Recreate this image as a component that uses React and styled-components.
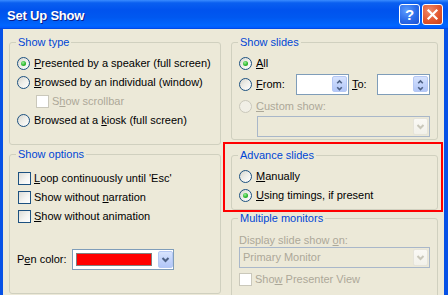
import React from 'react';
import styled, { createGlobalStyle, css } from 'styled-components';

const Global = createGlobalStyle`
  html, body { margin: 0; padding: 0; background: #ECE9D8; }
  body { font-family: "Liberation Sans", Arial, sans-serif; font-size: 11px; }
  * { box-sizing: border-box; }
`;

const Window = styled.div`
  width: 448px;
  height: 295px;
  overflow: hidden;
  display: flex;
  flex-direction: column;
  background: #0651E6;
`;

const TitleBar = styled.div`
  height: 29px;
  flex: none;
  display: flex;
  align-items: center;
  padding: 0 5px 0 7px;
  gap: 2px;
  background: linear-gradient(180deg, #3A8CFF 0%, #0A5FF0 10%, #0053EE 35%, #0058F0 60%, #0066FF 88%, #005BFF 95%, #0043DA 100%);
`;

const Title = styled.div`
  flex: 1;
  color: #fff;
  font-family: "Liberation Sans", Arial, sans-serif;
  font-weight: bold;
  font-size: 13px;
  letter-spacing: -0.2px;
  text-shadow: 1px 1px 0 #0A1D8A;
  padding-top: 1px;
`;

const CapButton = styled.div`
  width: 21px;
  height: 21px;
  border: 1px solid #fff;
  border-radius: 3px;
  display: flex;
  align-items: center;
  justify-content: center;
  color: #fff;
  font-weight: bold;
  font-size: 15px;
  background: ${p => p.close
    ? 'radial-gradient(circle at 35% 30%, #F08A6A 0%, #E2572F 55%, #C8401C 100%)'
    : 'radial-gradient(circle at 35% 30%, #5C9DFF 0%, #2B6BE8 55%, #1C50D2 100%)'};
`;

const Frame = styled.div`
  flex: 1;
  display: flex;
  padding: 0 4px 0 3px;
  min-height: 0;
`;

const Client = styled.div`
  flex: 1;
  background: #ECE9D8;
  display: grid;
  grid-template-columns: 212px 207px;
  column-gap: 10px;
  padding: 7px 6px 0 6px;
  align-items: start;
  min-height: 0;
`;

const Column = styled.div`
  display: flex;
  flex-direction: column;
`;

const Group = styled.fieldset`
  margin: ${p => p.mt || 0}px 0 0 0;
  padding: 0;
  border: 1px solid #D0D0BF;
  border-radius: 3px;
  min-width: 0;
`;

const Legend = styled.legend`
  margin-left: 6px;
  padding: 0 2px;
  color: #0046D5;
  line-height: 13px;
  font-size: 11px;
`;

const GroupBody = styled.div`
  display: flex;
  flex-direction: column;
  padding: ${p => p.pad};
`;

const Row = styled.label`
  display: flex;
  align-items: center;
  height: ${p => p.h || 19}px;
  margin-left: ${p => p.indent || 0}px;
  margin-top: ${p => p.mt || 0}px;
  gap: ${p => p.gap ?? 4}px;
  white-space: nowrap;
  color: ${p => (p.disabled ? '#ACA899' : '#000')};
`;

const Text = styled.span`
  line-height: 13px;
  width: ${p => (p.w ? `${p.w}px` : 'auto')};
  flex: none;
  padding-left: ${p => p.pl || 0}px;
  color: ${p => (p.disabled ? '#ACA899' : 'inherit')};
`;

const Key = styled.span`
  text-decoration: underline;
  text-underline-offset: 1px;
`;

const RadioCircle = styled.span`
  width: 13px;
  height: 13px;
  flex: none;
  border-radius: 50%;
  position: relative;
  border: 1px solid ${p => (p.disabled ? '#CAC8BB' : '#1C5180')};
  background: ${p => (p.disabled
    ? '#F1EFE6'
    : 'linear-gradient(135deg, #D6D5CD 0%, #EDEDE8 45%, #FFFFFF 100%)')};
  ${p => p.checked && css`
    &::after {
      content: '';
      position: absolute;
      left: 3px;
      top: 3px;
      width: 5px;
      height: 5px;
      border-radius: 50%;
      background: radial-gradient(circle at 40% 35%, #9CF09C 0%, #2EB82E 55%, #1E961E 100%);
    }
  `}
`;

const CheckBox = styled.span`
  width: 13px;
  height: 13px;
  flex: none;
  border: 1px solid ${p => (p.disabled ? '#CAC8BB' : '#1C5180')};
  background: ${p => (p.disabled ? '#FFFFFF' : 'linear-gradient(135deg, #DCDCD7 0%, #F4F4F1 55%, #FFFFFF 100%)')};
`;

const Spin = styled.div`
  width: 53px;
  height: 21px;
  flex: none;
  border: 1px solid #7F9DB9;
  background: #fff;
  display: flex;
  justify-content: flex-end;
  padding: 1px 1px 2px 1px;
`;

const SpinButton = styled.div`
  width: 15px;
  height: 100%;
  border: 1px solid #B5C8F4;
  border-radius: 2px;
  background: linear-gradient(180deg, #D6E2FD 0%, #C3D4FB 50%, #B3C7F7 100%);
  display: flex;
`;

const Combo = styled.div`
  width: ${p => p.w}px;
  height: 21px;
  flex: none;
  margin-left: ${p => p.ml || 0}px;
  border: 1px solid ${p => (p.disabled ? '#A9B7C9' : '#7F9DB9')};
  background: ${p => (p.disabled ? '#ECE9D8' : '#fff')};
  display: flex;
  align-items: center;
  padding: 1px;
  gap: 3px;
`;

const ComboText = styled.span`
  flex: 1;
  padding-left: 2px;
  color: #ACA899;
  line-height: 13px;
  white-space: nowrap;
  overflow: hidden;
`;

const Spacer = styled.span`
  flex: 1;
`;

const Swatch = styled.span`
  width: 76px;
  height: 13px;
  margin-left: 2px;
  border: 1px solid #808080;
  background: #FF0000;
  flex: none;
`;

const DropButton = styled.div`
  width: 15px;
  height: 17px;
  flex: none;
  border-radius: 2px;
  display: flex;
  border: 1px solid ${p => (p.disabled ? '#E6E4DA' : '#B5C8F4')};
  background: ${p => (p.disabled
    ? 'linear-gradient(180deg, #FAF9F5 0%, #F2F1EA 100%)'
    : 'linear-gradient(180deg, #D8E4FD 0%, #C3D4FB 50%, #B3C7F7 100%)')};
`;

const Highlight = styled.div`
  margin: 2px -5px 0 -8px;
  padding: 5px 3px 0 6px;
  border: 2px solid #FF0000;
`;

const Arrow = ({ disabled }) => (
  <svg width="13" height="15" viewBox="0 0 13 15">
    <path d="M3.5 6 L6.5 9 L9.5 6" fill="none" stroke={disabled ? '#C9C7BA' : '#4D6185'} strokeWidth="2" />
  </svg>
);

const SpinArrows = () => (
  <svg width="13" height="16" viewBox="0 0 13 16">
    <path d="M4.2 6.2 L6.5 3.9 L8.8 6.2" fill="none" stroke="#4D6185" strokeWidth="1.6" />
    <path d="M4.2 10.2 L6.5 12.5 L8.8 10.2" fill="none" stroke="#4D6185" strokeWidth="1.6" />
  </svg>
);

const Radio = ({ checked, disabled, children, ...rest }) => (
  <Row disabled={disabled} {...rest}>
    <RadioCircle checked={checked} disabled={disabled} />
    <Text>{children}</Text>
  </Row>
);

const Check = ({ disabled, children, ...rest }) => (
  <Row disabled={disabled} gap={3} {...rest}>
    <CheckBox disabled={disabled} />
    <Text>{children}</Text>
  </Row>
);

export default function App() {
  return (
    <>
      <Global />
      <Window>
        <TitleBar>
          <Title>Set Up Show</Title>
          <CapButton>?</CapButton>
          <CapButton close>
            <svg width="13" height="13" viewBox="0 0 13 13">
              <path d="M2.5 2.5 L10.5 10.5 M10.5 2.5 L2.5 10.5" stroke="#fff" strokeWidth="2.2" strokeLinecap="square" />
            </svg>
          </CapButton>
        </TitleBar>
        <Frame>
          <Client>
            <Column>
              <Group>
                <Legend>Show type</Legend>
                <GroupBody pad="5px 0 14px 7px">
                  <Radio checked><Key>P</Key>resented by a speaker (full screen)</Radio>
                  <Radio><Key>B</Key>rowsed by an individual (window)</Radio>
                  <Check disabled indent={19}>S<Key>h</Key>ow scrollbar</Check>
                  <Radio>Browsed at a <Key>k</Key>iosk (full screen)</Radio>
                </GroupBody>
              </Group>
              <Group mt={3}>
                <Legend>Show options</Legend>
                <GroupBody pad="8px 0 23px 8px">
                  <Check><Key>L</Key>oop continuously until 'Esc'</Check>
                  <Check>Show without <Key>n</Key>arration</Check>
                  <Check><Key>S</Key>how without animation</Check>
                  <Row h={21} mt={23} gap={5} indent={-1}>
                    <Text>P<Key>e</Key>n color:</Text>
                    <Combo w={102}>
                      <Swatch />
                      <Spacer />
                      <DropButton><Arrow /></DropButton>
                    </Combo>
                  </Row>
                </GroupBody>
              </Group>
            </Column>
            <Column>
              <Group>
                <Legend>Show slides</Legend>
                <GroupBody pad="5px 0 2px 7px">
                  <Radio checked><Key>A</Key>ll</Radio>
                  <Row h={21} mt={1} gap={0}>
                    <RadioCircle />
                    <Text w={44} pl={4}><Key>F</Key>rom:</Text>
                    <Spin><SpinButton><SpinArrows /></SpinButton></Spin>
                    <Text w={28} pl={3}><Key>T</Key>o:</Text>
                    <Spin><SpinButton><SpinArrows /></SpinButton></Spin>
                  </Row>
                  <Radio disabled mt={2}><Key>C</Key>ustom show:</Radio>
                  <Combo w={173} ml={18} disabled>
                    <Spacer />
                    <DropButton disabled><Arrow disabled /></DropButton>
                  </Combo>
                </GroupBody>
              </Group>
              <Highlight>
                <Group>
                  <Legend>Advance slides</Legend>
                  <GroupBody pad="5px 0 4px 7px">
                    <Radio><Key>M</Key>anually</Radio>
                    <Radio checked><Key>U</Key>sing timings, if present</Radio>
                  </GroupBody>
                </Group>
              </Highlight>
              <Group>
                <Legend>Multiple monitors</Legend>
                <GroupBody pad="9px 0 20px 7px">
                  <Text disabled>Display slide show <Key>o</Key>n:</Text>
                  <Combo w={191} disabled>
                    <ComboText>Primary Monitor</ComboText>
                    <DropButton disabled><Arrow disabled /></DropButton>
                  </Combo>
                  <Check disabled mt={2}>Sho<Key>w</Key> Presenter View</Check>
                </GroupBody>
              </Group>
            </Column>
          </Client>
        </Frame>
      </Window>
    </>
  );
}
